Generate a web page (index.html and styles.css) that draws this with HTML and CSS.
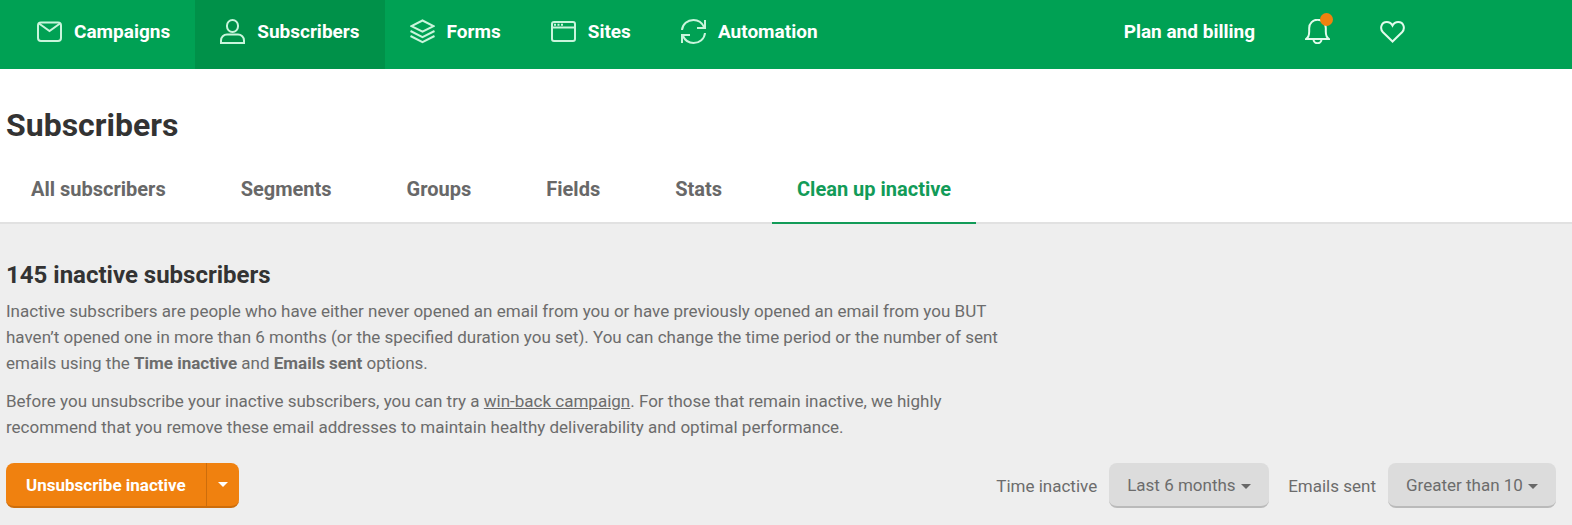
FILE: index.html
```
<!DOCTYPE html>
<html lang="en">
  <head>
    <meta charset="utf-8" />
    <title>Subscribers</title>
    <meta name="viewport" content="width=device-width, initial-scale=1.0" />
    <link rel="stylesheet" href="styles.css">
  </head>
  <body>
    <header class="topbar">
      <nav class="main-nav">
        <a href="#">
          <svg class="icon" viewBox="0 0 25 25"><rect x="1" y="3.500" width="23" height="18.500" rx="3"/><path d="M2 4.500l10.500 7.500L23 4.500"/></svg>
          Campaigns
        </a>
        <a href="#" class="active">
          <svg class="icon" viewBox="0 0 25 25"><rect x="7" y="1" width="11" height="12" rx="5.500"/><path d="M1 24v-2.500a6 6 0 0 1 6-6h11a6 6 0 0 1 6 6V24z"/></svg>
          Subscribers
        </a>
        <a href="#">
          <svg class="icon" viewBox="0 0 25 25"><path d="M12.500 1.500L23.500 7.200l-11 5.500-11-5.500zM.5 12l12 6.200 12-6.200M.5 17l12 6.200 12-6.200"/></svg>
          Forms
        </a>
        <a href="#">
          <svg class="icon" viewBox="0 0 25 25"><rect x="1" y="3" width="23" height="19" rx="2"/><path d="M1 8.500h23"/><path d="M3 5.700h2M6.500 5.700h2M10 5.700h2"/></svg>
          Sites
        </a>
        <a href="#">
          <svg class="icon" viewBox="0 0 25 25"><path d="M1 11C1.500 5 6.500 1 12.500 1c4.500 0 8.500 2.600 10.500 7M24 1v8h-8M24 14C23.500 20 18.500 24 12.500 24c-4.500 0-8.500-2.600-10.500-7M1 24v-8h8"/></svg>
          Automation
        </a>
      </nav>
      <nav class="account-nav">
        <a href="#">Plan and billing</a>
        <a href="#" class="bell" aria-label="Notifications">
          <svg class="icon" viewBox="0 0 25 25"><path d="M1 20c2.500-1.500 3.200-4 3.200-7.500V9a8.300 8.300 0 0 1 16.600 0v3.500c0 3.500.7 6 3.200 7.500zM8.500 20.300a4 4 0 0 0 8 0"/></svg>
        </a>
        <a href="#" aria-label="Favourites">
          <svg class="icon heart" viewBox="0 0 25 25"><path d="M12.500 22.500L3 13.300C-.5 9.500 1.200 3 6.800 3c2.700 0 4.500 1.300 5.700 3.600C13.700 4.300 15.500 3 18.200 3c5.600 0 7.300 6.500 3.800 10.300z"/></svg>
        </a>
      </nav>
    </header>

    <div class="page-head">
      <h1>Subscribers</h1>
      <nav class="tabs">
        <a href="#">All subscribers</a>
        <a href="#">Segments</a>
        <a href="#">Groups</a>
        <a href="#">Fields</a>
        <a href="#">Stats</a>
        <a href="#" class="active">Clean up inactive</a>
      </nav>
    </div>

    <main>
      <h2>145 inactive subscribers</h2>
      <div class="intro">
        <p>
          Inactive subscribers are people who have either never opened an email from you or have previously opened an email from you BUT<br>
          haven’t opened one in more than 6 months (or the specified duration you set). You can change the time period or the number of sent<br>
          emails using the <strong>Time inactive</strong> and <strong>Emails sent</strong> options.
        </p>
        <p>
          Before you unsubscribe your inactive subscribers, you can try a <a href="#">win-back campaign</a>. For those that remain inactive, we highly<br>
          recommend that you remove these email addresses to maintain healthy deliverability and optimal performance.
        </p>
      </div>

      <div class="toolbar">
        <div class="split-button">
          <button type="button">Unsubscribe inactive</button>
          <button type="button" class="toggle" aria-label="More actions"><span class="caret"></span></button>
        </div>
        <div class="filters">
          <label for="time-inactive">Time inactive</label>
          <span class="select">
            <select id="time-inactive"><option>Last 6 months</option></select>
          </span>
          <label for="emails-sent">Emails sent</label>
          <span class="select">
            <select id="emails-sent"><option>Greater than 10</option></select>
          </span>
        </div>
      </div>
    </main>
  </body>
</html>
```
FILE: styles.css
```
* {
  box-sizing: border-box;
}

body {
  margin: 0;
  background: #eee;
  color: #6c6c6c;
  font-family: Roboto, "Liberation Sans", sans-serif;
  font-size: 17px;
  line-height: 26px;
}

.topbar {
  display: flex;
  justify-content: space-between;
  padding: 0 142px 0 12px;
  background: #00a154;
}

.main-nav,
.account-nav {
  display: flex;
}

.topbar a {
  display: flex;
  align-items: center;
  gap: 12px;
  height: 69px;
  padding: 0 25px 6px;
  color: #fff;
  font-size: 19px;
  font-weight: bold;
  text-decoration: none;
  white-space: nowrap;
}

.topbar a.active {
  background: #009149;
}

.icon {
  width: 25px;
  height: 25px;
  fill: none;
  stroke: #c9f5dc;
  stroke-width: 2;
}

.bell {
  position: relative;
}

.bell .icon,
.heart {
  stroke: #e2fbec;
}

.bell::after {
  content: "";
  position: absolute;
  top: 13px;
  right: 22px;
  width: 13px;
  height: 13px;
  border-radius: 50%;
  background: #f0810f;
}

.page-head {
  padding: 36px 6px 0;
  background: #fff;
  border-bottom: 2px solid #e1e1e1;
}

h1 {
  margin: 0;
  color: #333;
  font-size: 32px;
  line-height: 40px;
}

.tabs {
  display: flex;
  gap: 25px;
  margin-bottom: -2px;
}

.tabs a {
  padding: 31px 25px 20px;
  border-bottom: 2px solid transparent;
  color: #686868;
  font-size: 20px;
  font-weight: bold;
  text-decoration: none;
  white-space: nowrap;
}

.tabs a.active {
  border-color: #129b58;
  color: #129b58;
}

main {
  padding: 36px 16px 16px 6px;
}

h2 {
  margin: 0 0 8px;
  color: #333;
  font-size: 24px;
  line-height: 30px;
}

.intro p {
  margin: 0 0 12px;
}

.intro a {
  color: inherit;
}

.toolbar {
  display: flex;
  justify-content: space-between;
  padding-top: 11px;
}

button,
select {
  height: 45px;
  font: inherit;
  cursor: pointer;
}

.split-button {
  display: flex;
}

.split-button button {
  padding: 0 20px;
  border: 0;
  border-bottom: 2px solid #cd6d0b;
  border-radius: 8px 0 0 8px;
  background: #f0810f;
  color: #fff;
  font-weight: bold;
}

.split-button .toggle {
  padding: 0 11px;
  border-left: 1px solid #cd6d0b;
  border-radius: 0 8px 8px 0;
}

.caret {
  display: block;
  border: 5px solid transparent;
  border-top-color: #fff;
  border-bottom: 0;
}

.filters {
  display: flex;
  align-items: center;
}

.filters label {
  margin: 0 12px 0 19px;
}

.select {
  position: relative;
}

.select select {
  display: block;
  appearance: none;
  padding: 0 33px 0 18px;
  border: 0;
  border-bottom: 2px solid #bababa;
  border-radius: 8px;
  background: #dcdcdc;
  color: #6c6c6c;
}

.select::after {
  content: "";
  position: absolute;
  top: 21px;
  right: 18px;
  border: 5px solid transparent;
  border-top-color: #686868;
  border-bottom: 0;
  pointer-events: none;
}
```
